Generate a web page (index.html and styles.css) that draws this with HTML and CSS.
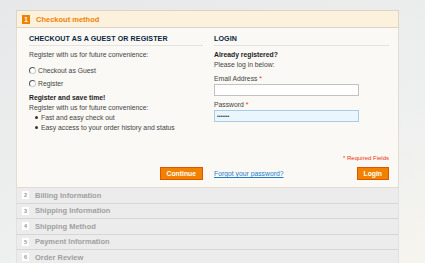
FILE: index.html
```html
<!DOCTYPE html>
<html lang="en">
<head>
    <meta charset="UTF-8">
    <title>Checkout</title>
    <link rel="stylesheet" href="styles.css">
</head>
<body>
<div class="page">
  <ol class="opc">
    <li class="section active">
      <div class="stepTitle"><span class="number">1</span><h2>Checkout method</h2></div>
      <div class="step">
        <div class="col">
          <h3>Checkout as a Guest or Register</h3>
          <p>Register with us for future convenience:</p>
          <ul class="radios">
            <li><span class="radio"></span>Checkout as Guest</li>
            <li><span class="radio"></span>Register</li>
          </ul>
          <h4>Register and save time!</h4>
          <p>Register with us for future convenience:</p>
          <ul class="bullets">
            <li>Fast and easy check out</li>
            <li>Easy access to your order history and status</li>
          </ul>
        </div>
        <div class="col">
          <h3>Login</h3>
          <h4>Already registered?</h4>
          <p>Please log in below:</p>
          <label class="field">Email Address <em>*</em></label>
          <div class="input"></div>
          <label class="field pass">Password <em>*</em></label>
          <div class="input focus">&bull;&bull;&bull;&bull;&bull;&bull;&bull;</div>
          <p class="required">* Required Fields</p>
        </div>
        <div class="buttons">
          <button class="btn">Continue</button>
        </div>
        <div class="buttons login">
          <a href="#">Forgot your password?</a>
          <button class="btn">Login</button>
        </div>
      </div>
    </li>
    <li class="section"><div class="stepTitle"><span class="number">2</span><h2>Billing Information</h2></div></li>
    <li class="section"><div class="stepTitle"><span class="number">3</span><h2>Shipping Information</h2></div></li>
    <li class="section"><div class="stepTitle"><span class="number">4</span><h2>Shipping Method</h2></div></li>
    <li class="section"><div class="stepTitle"><span class="number">5</span><h2>Payment Information</h2></div></li>
    <li class="section"><div class="stepTitle"><span class="number">6</span><h2>Order Review</h2></div></li>
  </ol>
</div>
</body>
</html>
```

FILE: styles.css
```css
body {
    margin: 0;
    height: 263px;
    overflow: hidden;
    font-family: "Liberation Sans", Arial, sans-serif;
    font-size: 6.8px;
    color: #444;
    background: linear-gradient(160deg, #e6e8e9 0%, #eef0f0 60%, #f6f4ee 100%);
}

.page {
    padding: 10px 0 0 16px;
    width: 383px;
}

.opc {
    list-style: none;
    margin: 0;
    padding: 0;
}

/* step headers */
.stepTitle {
    display: flex;
    align-items: center;
    height: 14.5px;
    padding-left: 5px;
    background: #ececec;
    border-bottom: 1px solid #d6d6d6;
    border-left: 1px solid #e2e2e2;
    border-right: 1px solid #e2e2e2;
}
.stepTitle h2 {
    margin: 0;
    font-size: 7.5px;
    font-weight: bold;
    color: #a0a0a0;
}
.number {
    width: 7px;
    height: 8px;
    margin-right: 6px;
    background: #fff;
    color: #999;
    font-size: 5.5px;
    font-weight: bold;
    text-align: center;
    line-height: 8px;
}

.active .stepTitle {
    height: 16px;
    background: #fbf1dd;
    border: 1px solid #ddd5c4;
}
.active .stepTitle h2 {
    color: #f18200;
}
.active .number {
    width: 8px;
    height: 9px;
    line-height: 9px;
    background: #f18200;
    color: #fff;
    font-size: 6.5px;
}

/* step body */
.step {
    display: grid;
    grid-template-columns: 174px 175px;
    column-gap: 11px;
    padding: 7px 11px 7px 12px;
    background: #faf9f5;
    border: 1px solid #e3ddd1;
    border-top: 0;
}

h3 {
    margin: 0 0 5px;
    padding-bottom: 2px;
    border-bottom: 1px solid #e4e2dc;
    font-size: 7.1px;
    text-transform: uppercase;
    color: #0a263c;
    letter-spacing: 0.1px;
}
h4 {
    margin: 0 0 3px;
    font-size: 6.8px;
    color: #222;
}
p {
    margin: 0 0 3px;
}

.radios {
    list-style: none;
    margin: 8px 0 7px;
    padding: 0;
}
.radios li {
    display: flex;
    align-items: center;
    height: 8px;
    margin-bottom: 5px;
}
.radio {
    width: 5px;
    height: 5px;
    margin-right: 2px;
    border: 1px solid #555;
    border-right-color: #ccc;
    border-bottom-color: #ccc;
    border-radius: 50%;
    background: #fff;
}

.bullets {
    list-style: none;
    margin: 0;
    padding-left: 6px;
}
.bullets li {
    display: flex;
    align-items: center;
    margin-bottom: 3px;
}
.bullets li::before {
    content: "";
    width: 3px;
    height: 3px;
    margin-right: 3px;
    border-radius: 50%;
    background: #333;
}

.field {
    display: block;
    margin: 7px 0 2px;
}
.field.pass {
    margin-top: 5px;
}
.field em {
    font-style: normal;
    color: #eb340a;
}
.input {
    width: 141px;
    height: 10px;
    border: 1px solid #c2c2c2;
    background: #fff;
    font-size: 5px;
    line-height: 10px;
    padding-left: 2px;
}
.input.focus {
    background: #eaf5fd;
    border-color: #a8cde8;
    color: #333;
}
.required {
    margin: 33px 0 0;
    text-align: right;
    color: #eb340a;
    font-size: 6px;
}

.buttons {
    display: flex;
    justify-content: flex-end;
    align-items: center;
    margin-top: 6px;
}
.buttons.login {
    justify-content: space-between;
}
.buttons a {
    color: #1e7ec8;
    font-size: 6.8px;
}
.btn {
    height: 13px;
    padding: 0 6px;
    border: 1px solid #de5400;
    background: #f18200;
    color: #fff;
    font-family: "Liberation Sans", Arial, sans-serif;
    font-size: 6.8px;
    font-weight: bold;
}
```
